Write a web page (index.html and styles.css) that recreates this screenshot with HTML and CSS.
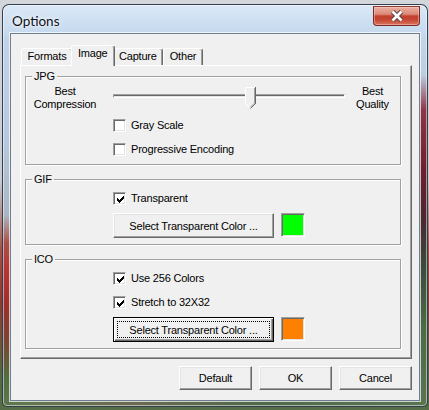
FILE: index.html
```html
<!DOCTYPE html>
<html>
<head>
<meta charset="utf-8">
<title>Options</title>
<link rel="stylesheet" href="styles.css">
</head>
<body>
<div class="window">
  <div class="titlebar">
    <span class="title">Options</span>
    <div class="close">
      <svg width="14" height="12" viewBox="0 0 14 12">
        <path d="M2.5 1.5 L11.5 10.5 M11.5 1.5 L2.5 10.5" stroke="#5a4646" stroke-width="4.6" fill="none"/>
        <path d="M2.5 1.5 L11.5 10.5 M11.5 1.5 L2.5 10.5" stroke="#ffffff" stroke-width="2.6" fill="none"/>
      </svg>
    </div>
  </div>
  <div class="client">
    <div class="tabs">
      <div class="tab">Formats</div>
      <div class="tab selected">Image</div>
      <div class="tab">Capture</div>
      <div class="tab">Other</div>
    </div>
    <div class="panel">
      <fieldset class="group group-jpg">
        <legend>JPG</legend>
        <div class="slider-row">
          <div class="slider-label slider-left">Best<br>Compression</div>
          <div class="slider">
            <div class="track"></div>
            <svg class="thumb" width="11" height="22" viewBox="0 0 11 22" shape-rendering="crispEdges">
              <polygon points="0,0 11,0 11,16 5.5,21.5 0,16" fill="#f0f0f0"/>
              <path d="M0.5 16 V0.5 H10" stroke="#ffffff" fill="none"/>
              <path d="M0.5 16.5 L5.5 21.5" stroke="#ffffff" fill="none" shape-rendering="auto"/>
              <path d="M9.5 1 V16" stroke="#a0a0a0" fill="none"/>
              <path d="M10.5 0 V16.5" stroke="#696969" fill="none"/>
              <path d="M9.5 16 L5 20.5" stroke="#a0a0a0" fill="none" shape-rendering="auto"/>
              <path d="M10.5 16.5 L5.5 21.5" stroke="#696969" fill="none" shape-rendering="auto"/>
            </svg>
          </div>
          <div class="slider-label slider-right">Best<br>Quality</div>
        </div>
        <label class="check check-first"><span class="box"></span>Gray Scale</label>
        <label class="check check-next"><span class="box"></span>Progressive Encoding</label>
      </fieldset>

      <fieldset class="group">
        <legend>GIF</legend>
        <label class="check check-first"><span class="box checked"><svg width="7" height="7" viewBox="0 0 7 7" shape-rendering="crispEdges"><path d="M6 0h1v1h-1z M5 1h2v1h-2z M0 2h1v1h-1z M4 2h3v1h-3z M0 3h2v1h-2z M3 3h3v1h-3z M0 4h5v1h-5z M1 5h3v1h-3z M2 6h1v1h-1z" fill="#000"/></svg></span>Transparent</label>
        <div class="color-row">
          <button class="btn btn-select"><span class="btn-face">Select Transparent Color ...</span></button>
          <span class="swatch swatch-green"></span>
        </div>
      </fieldset>

      <fieldset class="group">
        <legend>ICO</legend>
        <label class="check check-first"><span class="box checked"><svg width="7" height="7" viewBox="0 0 7 7" shape-rendering="crispEdges"><path d="M6 0h1v1h-1z M5 1h2v1h-2z M0 2h1v1h-1z M4 2h3v1h-3z M0 3h2v1h-2z M3 3h3v1h-3z M0 4h5v1h-5z M1 5h3v1h-3z M2 6h1v1h-1z" fill="#000"/></svg></span>Use 256 Colors</label>
        <label class="check check-next"><span class="box checked"><svg width="7" height="7" viewBox="0 0 7 7" shape-rendering="crispEdges"><path d="M6 0h1v1h-1z M5 1h2v1h-2z M0 2h1v1h-1z M4 2h3v1h-3z M0 3h2v1h-2z M3 3h3v1h-3z M0 4h5v1h-5z M1 5h3v1h-3z M2 6h1v1h-1z" fill="#000"/></svg></span>Stretch to 32X32</label>
        <div class="color-row">
          <button class="btn btn-select btn-focus"><span class="btn-face">Select Transparent Color ...</span></button>
          <span class="swatch swatch-orange"></span>
        </div>
      </fieldset>
    </div>
    <div class="buttons">
      <button class="btn btn-dlg"><span class="btn-face">Default</span></button>
      <button class="btn btn-dlg"><span class="btn-face">OK</span></button>
      <button class="btn btn-dlg"><span class="btn-face">Cancel</span></button>
    </div>
  </div>
</div>
</body>
</html>
```

FILE: styles.css
```css
* { box-sizing: border-box; }

html, body {
  margin: 0;
  padding: 0;
}

body {
  width: 429px;
  height: 410px;
  overflow: hidden;
  font-family: "Liberation Sans", Arial, sans-serif;
  font-size: 11px;
  letter-spacing: -0.2px;
  color: #000;
  background:
    linear-gradient(to bottom, #d3d6da 0, #c8cbcf 180px, #a05048 250px, #8a3a34 300px, #4f6a42 380px, #566e48 410px);
}

/* ---------- window frame ---------- */
.window {
  margin: 4px 0 0 2px;
  width: 426px;
  height: 403px;
  border: 1px solid rgba(28, 38, 52, 0.85);
  border-radius: 7px 7px 5px 5px;
  padding: 0 7px 5px 7px;
  display: flex;
  flex-direction: column;
  box-shadow: inset 0 0 0 1px rgba(255, 255, 255, 0.5);
  background:
    linear-gradient(to bottom, #dce9f7 0, #cfe0f2 14px, #c6d9ee 28px, rgba(198, 217, 238, 0) 34px) top / 100% 40px no-repeat,
    linear-gradient(to bottom, #c4d6ea 0, #b6c8dc 140px, #aab6c2 210px, #a85048 238px, #b83434 265px, #9e2e2c 300px, #7a4434 335px, #50703f 375px, #5e7850 403px) left / 10px 100% no-repeat,
    linear-gradient(to bottom, #c9dcf0 0, #bccde0 70px, #8e3646 105px, #6f1f2c 165px, #4a2830 215px, #3c4a3a 260px, #4c6a44 320px, #5a7650 403px) right / 10px 100% no-repeat,
    linear-gradient(to right, #5e7a4c 0, #6c6a50 30%, #4f6a48 60%, #5a7452 100%) bottom / 100% 8px no-repeat,
    #b7cbe1;
}

.titlebar {
  height: 28px;
  flex: none;
  display: flex;
  justify-content: space-between;
  align-items: flex-start;
}

.title {
  font-family: Lato, "Liberation Sans", sans-serif;
  font-size: 13.5px;
  letter-spacing: 0;
  line-height: 16px;
  padding: 8px 0 0 2px;
  color: #101018;
  text-shadow: 0 0 6px rgba(255, 255, 255, 0.95), 0 0 3px rgba(255, 255, 255, 0.9);
}

.close {
  width: 47px;
  height: 20px;
  margin-top: 1px;
  display: flex;
  align-items: center;
  justify-content: center;
  border: 1px solid #7a2a22;
  border-top-color: #8c3a32;
  border-radius: 0 0 4px 4px;
  box-shadow: inset 0 0 0 1px rgba(255, 210, 200, 0.45);
  background: linear-gradient(to bottom, #eab0a4 0, #dc8a78 40%, #c4402e 50%, #c54632 70%, #db7560 100%);
}

/* ---------- client area ---------- */
.client {
  flex: 1;
  display: flex;
  flex-direction: column;
  background: #f0f0f0;
  border: 1px solid #6e7e90;
  box-shadow: 0 0 0 1px rgba(255, 255, 255, 0.7);
  padding: 11px 7px 10px 9px;
}

/* ---------- tabs ---------- */
.tabs {
  display: flex;
  align-items: flex-end;
  padding-left: 1px;
}

.tab {
  height: 17px;
  padding: 1px 5.5px 0;
  line-height: 13px;
  background: #f0f0f0;
  border: 1px solid;
  border-bottom: 0;
  border-color: #fff #696969 transparent #fff;
  border-radius: 3px 3px 0 0;
  box-shadow: inset -1px 0 #a0a0a0;
  white-space: nowrap;
}

.tab.selected {
  position: relative;
  z-index: 1;
  height: 21px;
  margin: 0 -2px -1px;
  padding: 1px 6px 0;
}

.panel {
  border: 1px solid;
  border-color: #fff #696969 #696969 #fff;
  box-shadow: inset -1px -1px #a0a0a0;
  padding: 4px 10px 9px 4px;
}

/* ---------- group boxes ---------- */
.group {
  margin: 0;
  padding: 0 0 6px 0;
  min-inline-size: 0;
  border: 1px solid #a0a0a0;
  box-shadow: 1px 1px 0 #fff, inset 1px 1px 0 #fff;
}

.group + .group {
  margin-top: 8px;
}

.group legend {
  margin-left: 6px;
  padding: 0 2px;
  line-height: 13px;
  background: #f0f0f0;
}

.group-jpg {
  padding-top: 2px;
  padding-bottom: 8px;
}

.slider-row {
  display: flex;
  align-items: flex-start;
  height: 26px;
}

.slider-label {
  line-height: 13px;
  text-align: center;
}

.slider-left { width: 78px; }
.slider-right { width: 37px; }

.slider {
  position: relative;
  width: 250px;
  height: 22px;
  margin-top: 2px;
  padding: 7px 9px 0;
}

.track {
  height: 4px;
  border-top: 1px solid #a0a0a0;
  border-left: 1px solid #a0a0a0;
  border-bottom: 1px solid #fff;
  border-right: 1px solid #fff;
  background: linear-gradient(to bottom, #696969 0 1px, #e3e3e3 1px);
}

.thumb {
  position: absolute;
  left: 141px;
  top: 0;
}

/* ---------- checkboxes ---------- */
.check {
  display: flex;
  align-items: center;
  height: 13px;
  line-height: 13px;
  margin-left: 87px;
}

.group .check-first { margin-top: 6px; }
.group-jpg .check-first { margin-top: 8px; }
.check-next { margin-top: 11px; }

.box {
  width: 13px;
  height: 13px;
  flex: none;
  margin-right: 5px;
  display: flex;
  align-items: center;
  justify-content: center;
  background: #fff;
  border: 1px solid;
  border-color: #a0a0a0 #fff #fff #a0a0a0;
  box-shadow: inset 1px 1px #696969, inset -1px -1px #e3e3e3;
}

.box svg { margin: 1px 0 0 1px; }

/* ---------- buttons ---------- */
.btn {
  font: inherit;
  letter-spacing: inherit;
  color: #000;
  margin: 0;
  display: flex;
  background: #f0f0f0;
  border: 1px solid;
  border-color: #fff #696969 #696969 #fff;
  box-shadow: inset -1px -1px #a0a0a0, inset 1px 1px #e3e3e3;
  padding: 3px;
}

.btn-face {
  flex: 1;
  display: flex;
  align-items: center;
  justify-content: center;
  border: 1px solid transparent;
  white-space: nowrap;
}

.btn-focus {
  border-color: #000;
  box-shadow: inset 1px 1px #fff, inset -1px -1px #696969, inset -2px -2px #a0a0a0;
}

.btn-focus .btn-face {
  border: 1px dotted #000;
}

.color-row {
  display: flex;
  align-items: flex-start;
  margin: 8px 0 0 87px;
}

.btn-select {
  width: 161px;
  height: 25px;
}

.swatch {
  width: 24px;
  height: 24px;
  margin-left: 7px;
  border: 1px solid;
  border-color: #a0a0a0 #fff #fff #a0a0a0;
  box-shadow: inset 1px 1px #696969, inset -1px -1px #e3e3e3;
}

.swatch-green { background: #00ff00; }
.swatch-orange { background: #ff8000; }

.buttons {
  display: flex;
  justify-content: flex-end;
  gap: 7px;
  margin-top: 7px;
}

.btn-dlg {
  width: 73px;
  height: 24px;
}
```
